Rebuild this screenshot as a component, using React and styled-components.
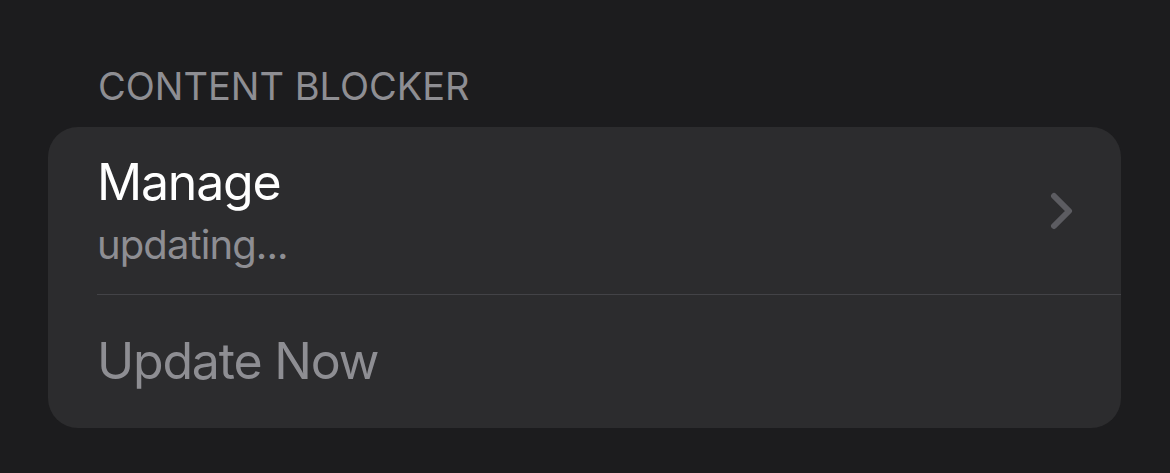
import styled, { createGlobalStyle } from "styled-components";

const GlobalStyle = createGlobalStyle`
  html, body {
    margin: 0;
    padding: 0;
    background: #1c1c1e;
  }

  body {
    font-family: Inter, "Noto Sans", "Liberation Sans", sans-serif;
    -webkit-font-smoothing: antialiased;
  }
`;

export default function App() {
  return (
    <>
      <GlobalStyle />
      <Page>
        <SectionHeader>CONTENT BLOCKER</SectionHeader>

        <Card>
          <Row>
            <RowInner $divider $height={168}>
              <Labels>
                <Title>Manage</Title>
                <Subtitle>updating...</Subtitle>
              </Labels>
              <Chevron />
            </RowInner>
          </Row>

          <Row>
            <RowInner $height={133}>
              <Title $disabled>Update Now</Title>
            </RowInner>
          </Row>
        </Card>
      </Page>
    </>
  );
}

function Chevron() {
  return (
    <ChevronIcon width="24" height="40" viewBox="0 0 24 40" aria-hidden="true">
      <polyline
        points="4,5 19,20 4,35"
        fill="none"
        stroke="#5c5c61"
        strokeWidth="6"
        strokeLinecap="round"
        strokeLinejoin="round"
      />
    </ChevronIcon>
  );
}

const Page = styled.div`
  width: 1170px;
  height: 473px;
  box-sizing: border-box;
  padding: 63px 49px 0 48px;
  background: #1c1c1e;
`;

const SectionHeader = styled.h3`
  margin: 0 0 18px 50px;
  font-size: 38px;
  font-weight: 400;
  line-height: 46px;
  color: #8e8e93;
`;

const Card = styled.div`
  background: #2c2c2e;
  border-radius: 30px;
  overflow: hidden;
`;

const Row = styled.div`
  padding-left: 49px;
`;

const RowInner = styled.div`
  display: flex;
  align-items: center;
  justify-content: space-between;
  box-sizing: border-box;
  height: ${(p) => p.$height}px;
  padding-right: 47px;
  border-bottom: ${(p) => (p.$divider ? "1px solid #434347" : "none")};
`;

const Labels = styled.div`
  display: flex;
  flex-direction: column;
  gap: 8px;
`;

const Title = styled.div`
  font-size: 50px;
  line-height: 61px;
  font-weight: 400;
  letter-spacing: -1.2px;
  color: ${(p) => (p.$disabled ? "#8e8e93" : "#ffffff")};
`;

const Subtitle = styled.div`
  font-size: 40px;
  line-height: 48px;
  font-weight: 400;
  letter-spacing: -0.9px;
  color: #8e8e93;
`;

const ChevronIcon = styled.svg`
  flex-shrink: 0;
  display: block;
`;
